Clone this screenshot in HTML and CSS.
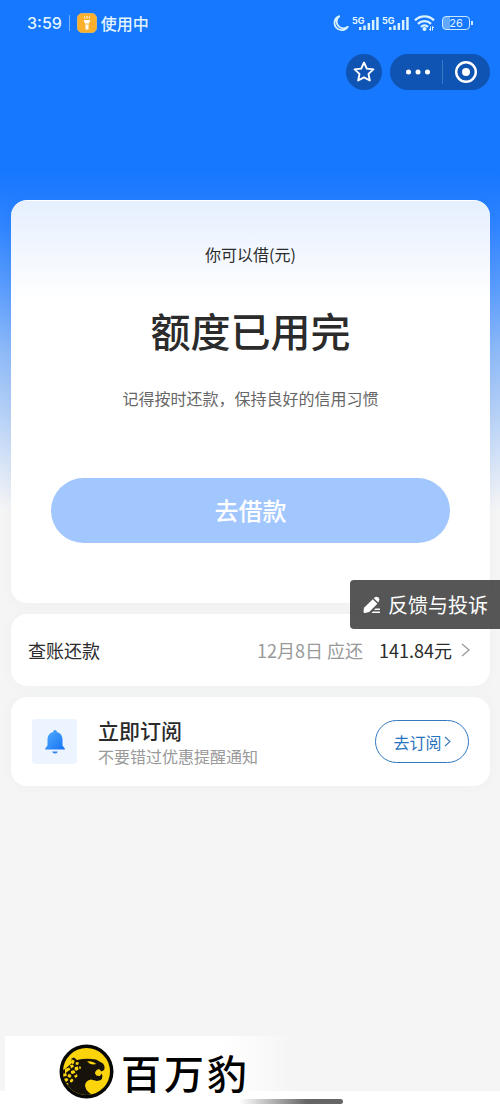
FILE: index.html
```html
<!DOCTYPE html>
<html lang="zh-CN">

<head>
  <meta charset="UTF-8" />
  <meta name="viewport" content="width=device-width, initial-scale=1.0" />
  <title>借款</title>
  <link rel="stylesheet" href="styles.css">
</head>

<body>
  <!-- 状态栏 -->
  <div class="status">
    <span class="time">3:59</span>
    <span class="line"></span>
    <svg class="torch" width="20" height="20" viewBox="0 0 20 20">
      <rect x="0.5" y="0.5" width="19" height="19" rx="4.5" fill="#fbb02b" stroke="#d9b566" />
      <path d="M7 7h6v1.800L11.500 10.500v6h-3v-6L7 8.800z" fill="#fff" />
      <path d="M7.500 3.500l.5 2M10 3v2.500M12.500 3.500l-.5 2" stroke="#fff" fill="none" />
      <path d="M10 10v2" stroke="#fbb02b" />
    </svg>
    <span class="using">使用中</span>
    <div class="system">
      <svg width="16" height="17" viewBox="0 0 16 17" fill="none" stroke="#d9f2ff" stroke-width="1.800" stroke-linejoin="round">
        <path d="M6.200 1.200a7.200 7.200 0 1 0 8.600 10.600A6.700 6.700 0 0 1 6.200 1.200z" />
      </svg>
      <div class="signal">
        <span>5G</span>
        <svg width="20" height="13" viewBox="0 0 20 13" fill="#d9f2ff">
          <path d="M0 10h2.500v3H0zM4.300 8.500h2.500V13H4.300zM8.600 6h2.500v7H8.600zM12.900 3h2.500v10h-2.500zM17.200 0h2.500v13h-2.500z" />
        </svg>
      </div>
      <div class="signal">
        <span>5G</span>
        <svg width="20" height="13" viewBox="0 0 20 13" fill="#d9f2ff">
          <path d="M0 10h2.500v3H0zM4.300 8.500h2.500V13H4.300zM8.600 6h2.500v7H8.600zM12.900 3h2.500v10h-2.500zM17.200 0h2.500v13h-2.500z" />
        </svg>
      </div>
      <svg class="wifi" width="21" height="16" viewBox="0 0 21 16" fill="none" stroke="#d9f2ff" stroke-width="2.400">
        <path d="M1 5.300a13.500 13.500 0 0 1 19 0M4 8.800a9.200 9.200 0 0 1 13 0M7 12a5 5 0 0 1 7 0" />
        <circle cx="10.500" cy="14" r="2" fill="#d9f2ff" stroke="none" />
        <path d="M16.500 11.500v4M15 14l1.500 1.500M18.500 15.500v-4M20 13l-1.500-1.500" stroke-width="1" />
      </svg>
      <div class="battery"><span>26</span></div>
    </div>
  </div>

  <!-- 小程序右上角按钮 -->
  <div class="nav">
    <button class="star" aria-label="收藏">
      <svg width="22" height="22" viewBox="0 0 22 22" fill="none" stroke="#fff" stroke-width="1.900" stroke-linejoin="round">
        <path d="M11 1.500l2.800 6.100 6.600.8-4.900 4.500 1.300 6.600L11 16.300l-5.800 3.200 1.300-6.600L1.600 8.400l6.600-.8z" />
      </svg>
    </button>
    <div class="capsule">
      <button aria-label="更多">
        <svg width="24" height="24" viewBox="0 0 24 24" fill="#fff">
          <circle cx="2.500" cy="12" r="2.500" />
          <circle cx="12" cy="12" r="2.500" />
          <circle cx="21.500" cy="12" r="2.500" />
        </svg>
      </button>
      <button aria-label="关闭">
        <svg width="24" height="24" viewBox="0 0 24 24">
          <circle cx="12" cy="12" r="9.800" fill="none" stroke="#fff" stroke-width="2.400" />
          <circle cx="12" cy="12" r="4" fill="#fff" />
        </svg>
      </button>
    </div>
  </div>

  <main>
    <!-- 额度 -->
    <section class="card quota">
      <p class="label">你可以借(元)</p>
      <h1>额度已用完</h1>
      <p class="tip">记得按时还款，保持良好的信用习惯</p>
      <button class="borrow">去借款</button>
    </section>

    <!-- 还款 -->
    <a class="card repay" href="#">
      <span class="name">查账还款</span>
      <span class="date">12月8日 应还</span>
      <span class="money">141.84元</span>
      <svg width="9" height="14" viewBox="0 0 9 14" fill="none" stroke="#999" stroke-width="1.300">
        <path d="M1 1l7 6-7 6" />
      </svg>
    </a>

    <!-- 订阅 -->
    <section class="card subscribe">
      <div class="bell">
        <svg width="20" height="24" viewBox="0 0 20 24">
          <defs>
            <linearGradient id="bellColor" x1="0" y1="0" x2="1" y2="1">
              <stop offset="0" stop-color="#51adff" />
              <stop offset="1" stop-color="#1672f2" />
            </linearGradient>
          </defs>
          <path d="M10 0a1.800 1.800 0 0 1 1.800 2C15.500 3 17.500 5.800 17.500 9.500v6l2.300 3v1H.2v-1l2.300-3v-6C2.500 5.800 4.500 3 8.200 2A1.800 1.800 0 0 1 10 0z" fill="url(#bellColor)" />
          <path d="M7.300 21.500h5.400a2.700 2 0 0 1-5.400 0z" fill="#2b83ec" />
        </svg>
      </div>
      <div class="text">
        <h2>立即订阅</h2>
        <p>不要错过优惠提醒通知</p>
      </div>
      <button class="go">
        去订阅
        <svg width="7" height="11" viewBox="0 0 7 11" fill="none" stroke="#3878b8" stroke-width="1.100">
          <path d="M1 1l5 4.500L1 10" />
        </svg>
      </button>
    </section>

    <!-- 浮在卡片上面的反馈按钮 -->
    <button class="feedback">
      <svg width="18" height="18" viewBox="0 0 18 18" fill="#fff">
        <path d="M1 11.800L9.800 3.200l4.600 4.600L6.200 16 2 17Q.4 17.200.5 15.500z" />
        <path d="M10.800 2.200l1-1q1.800-1.300 3.600.4t.4 3.700l-.6 1.300z" />
        <path d="M12.500 12.500H17V14h-6zM9.800 15.500H17V17H8.500z" />
      </svg>
      反馈与投诉
    </button>
  </main>

  <footer>
    <div class="brand">
      <svg width="55" height="55" viewBox="0 0 55 55">
        <defs>
          <clipPath id="face">
            <circle cx="27.500" cy="27.500" r="23.500" />
          </clipPath>
        </defs>
        <circle cx="27.500" cy="27.500" r="27" fill="#080806" />
        <circle cx="27.500" cy="27.500" r="23.500" fill="#fcd40c" />
        <g clip-path="url(#face)">
          <path d="M0 28L6 25 13 19 12.500 14.500 15 13.500 18 16Q27 14 37 15.500L44 19.500Q46.500 23 45 26L42.500 27.500 40 25Q36 26 36 29.500 37 32.500 41 32L42.500 29.500Q44.500 33 42 36L38 37 32 35.500Q26.500 36.500 26 41.500 27 48 34 51L28 55 0 55z" fill="#17130a" />
          <path d="M28 17.500q5-1.200 9.500 2.500-6 1.500-9.500-2.500z" fill="#fcd40c" />
          <g fill="#fcd40c">
            <path d="M13 15.500l2.500 1-.5 3-2 .5zM17 18l3 .5-1 2.500-2.500-.5zM11 21l3-.5 1 2-3 2zM16 23l3-.5.5 3-2.500 1.500-1.500-2zM6 25l4-1.500 1.500 2-3 2-2.500 2zM20.500 22l1.500 1-.5 2-1.500-.5zM12 27l3-1 1.500 2.500-2.500 1.500-2-.5zM4 30l3-1 1 2.500L4 33zM9 30.500l2-.5 1.500 2-1.500 2-2.500-1.500zM15 32l3-2 .5 2.500-2 1.500zM5 35l3-1 1.500 2L7 38zM11 36l2-1.500 1.500 1.500-1.500 2.500-2-.5zM7 39.500l2-.5.500 2z" />
          </g>
        </g>
      </svg>
      <span>百</span>
      <span>万</span>
      <span>豹</span>
    </div>
    <div class="home"></div>
  </footer>
</body>

</html>
```

FILE: styles.css
```css
* {
  margin: 0;
  padding: 0;
  box-sizing: border-box;
}

body {
  display: flex;
  flex-direction: column;
  min-height: 100vh;
  font-family: "Noto Sans CJK SC", sans-serif;
  color: #2b2b2b;
  background: #f5f5f5 linear-gradient(#1677ff 0, #1677ff 170px, #2f84ff 225px, #5b9dfc 290px, #8db9f8 350px, #b3cff6 410px, #d5e3f7 460px, #f5f5f5 510px) no-repeat;
}

button {
  border: none;
  background: none;
  font-family: inherit;
  cursor: pointer;
}

svg {
  display: block;
  flex-shrink: 0;
}

/* 状态栏 */
.status {
  display: flex;
  align-items: center;
  height: 46px;
  padding: 0 30px 0 27px;
  color: #e2f5ff;
}

.status .time {
  font: 500 16px Inter, sans-serif;
}

.status .line {
  width: 1px;
  height: 16px;
  margin: 0 7px;
  background: #72b0ff;
}

.status .using {
  margin-left: 4px;
  font-size: 16px;
  font-weight: 500;
  line-height: 24px;
}

.system {
  display: flex;
  align-items: center;
  margin-left: auto;
}

.signal {
  position: relative;
  width: 27px;
  height: 15px;
  margin-left: 3px;
}

.signal span {
  position: absolute;
  left: 0;
  top: 0;
  font: bold 9px/9px Inter, sans-serif;
}

.signal svg {
  margin: 1px 0 0 7px;
}

.wifi {
  margin: 0 7px 0 5px;
}

.battery {
  position: relative;
  width: 28px;
  height: 14px;
  border: 1px solid #c9e8ff;
  border-radius: 4px;
  background: linear-gradient(90deg, #62a8ff 26%, transparent 26%);
  font: 11px/12px Inter, sans-serif;
  text-align: center;
}

.battery::after {
  content: "";
  position: absolute;
  right: -4px;
  top: 4px;
  width: 2px;
  height: 4px;
  background: #c9e8ff;
}

/* 右上角按钮 */
.nav {
  display: flex;
  justify-content: flex-end;
  gap: 8px;
  padding: 8px 10px 0;
}

.star {
  display: flex;
  align-items: center;
  justify-content: center;
  width: 36px;
  height: 36px;
  border-radius: 50%;
  background: #0f54b3;
}

.capsule {
  display: flex;
  align-items: center;
  width: 100px;
  height: 36px;
  border-radius: 18px;
  background: #0f54b3;
}

.capsule button {
  display: flex;
  flex: 1;
  justify-content: center;
  padding-left: 4px;
}

.capsule button + button {
  padding: 0;
  border-left: 1px solid #3c78c8;
}

/* 卡片 */
main {
  position: relative;
  display: flex;
  flex-direction: column;
  flex: 1;
  gap: 11px;
  padding: 110px 10px 0 11px;
}

.card {
  border-radius: 16px;
  background: #fff;
  box-shadow: 0 0 12px rgba(60, 110, 180, 0.04);
}

.quota {
  display: flex;
  flex-direction: column;
  align-items: center;
  padding: 41px 40px 60px;
  background: linear-gradient(#e5effe, #fff 100px);
  border-top: 1px solid #fff;
}

.quota .label {
  font-size: 16px;
  line-height: 24px;
}

.quota h1 {
  margin-top: 36px;
  font-size: 40px;
  font-weight: 500;
  line-height: 56px;
}

.quota .tip {
  margin-top: 28px;
  font-size: 16px;
  line-height: 24px;
  color: #666;
}

.borrow {
  width: 100%;
  height: 65px;
  margin-top: 68px;
  padding-bottom: 2px;
  border-radius: 33px;
  background: #a2c7ff;
  color: #fff;
  font-size: 24px;
  font-weight: 500;
}

.repay {
  display: flex;
  align-items: center;
  height: 72px;
  padding: 0 20px 0 17px;
  color: #2b2b2b;
  font-size: 18px;
  text-decoration: none;
}

.repay .date {
  margin-left: auto;
  color: #999;
}

.repay .money {
  margin: 0 9px 0 16px;
}

.subscribe {
  display: flex;
  align-items: center;
  height: 89px;
  padding: 0 21px;
}

.bell {
  display: flex;
  align-items: center;
  justify-content: center;
  width: 45px;
  height: 45px;
  border-radius: 4px;
  background: #ecf4ff;
}

.subscribe .text {
  margin-left: 21px;
}

.subscribe h2 {
  font-size: 21px;
  font-weight: 500;
  line-height: 28px;
}

.subscribe p {
  font-size: 16px;
  line-height: 24px;
  color: #999;
}

.go {
  display: flex;
  align-items: center;
  justify-content: center;
  gap: 2px;
  width: 94px;
  height: 43px;
  margin-left: auto;
  border: 1px solid #3279c2;
  border-radius: 22px;
  color: #2873bd;
  font-size: 16px;
}

.feedback {
  position: absolute;
  right: 0;
  top: 490px;
  display: flex;
  align-items: center;
  gap: 7px;
  height: 49px;
  padding: 0 12px 0 13px;
  border-radius: 4px 0 0 4px;
  background: rgba(72, 72, 72, 0.92);
  color: #fff;
  font-size: 20px;
}

/* 底部 */
footer {
  position: relative;
  height: 20px;
  background: #fff;
}

.brand {
  position: absolute;
  left: 5px;
  bottom: 0;
  display: flex;
  align-items: center;
  gap: 3px;
  width: 290px;
  height: 75px;
  padding: 0 0 4px 54px;
  background: linear-gradient(90deg, #fff 75%, transparent);
  color: #000;
  font-family: "STXingkai", "KaiTi", "Noto Sans CJK SC", sans-serif;
  font-size: 40px;
  font-weight: 500;
}

.brand svg {
  margin-right: 4px;
}

.home {
  position: relative;
  width: 104px;
  height: 5px;
  margin: 8px auto 0;
  left: 41px;
  border-radius: 3px;
  background: linear-gradient(90deg, transparent, #666 65%);
}
```
